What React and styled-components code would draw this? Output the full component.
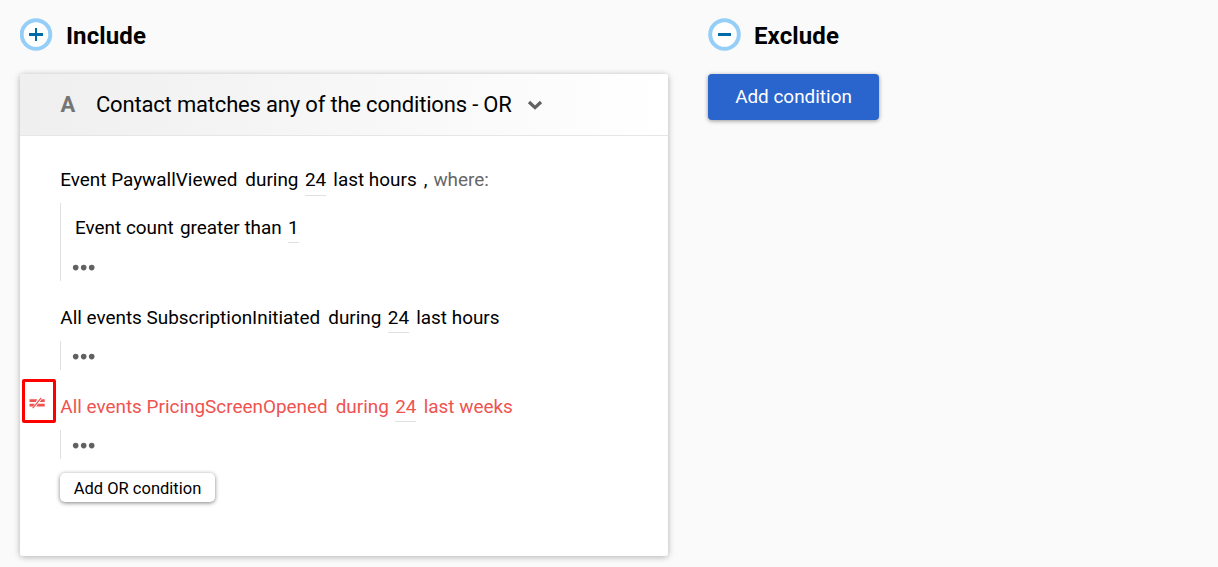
import React from "react";
import styled, { createGlobalStyle } from "styled-components";

const GlobalStyle = createGlobalStyle`
  * {
    box-sizing: border-box;
  }

  body {
    margin: 0;
    background: #fafafa;
    color: #000;
    font-family: Roboto, "Liberation Sans", sans-serif;
  }
`;

const Page = styled.main`
  display: grid;
  grid-template-columns: 648px 1fr;
  column-gap: 40px;
  min-height: 567px;
  padding: 18px 20px 0;
`;

const Heading = styled.header`
  display: flex;
  align-items: center;
  height: 33px;
  margin-bottom: 23px;
  gap: 13px;
`;

const Title = styled.h2`
  margin: 3px 0 0;
  font-size: 24px;
  line-height: 32px;
  font-weight: 700;
  letter-spacing: 0.1px;
`;

const Card = styled.section`
  height: 482px;
  background: #fff;
  border-radius: 3px;
  box-shadow: 0 1px 6px rgba(0, 0, 0, 0.3);
  overflow: hidden;
`;

const CardHeader = styled.div`
  display: flex;
  align-items: center;
  height: 62px;
  padding-left: 40.4px;
  background: linear-gradient(90deg, #efefef, #fff);
  border-bottom: 1px solid #e6e6e6;
  font-size: 22px;
`;

const Letter = styled.strong`
  width: 35.6px;
  color: #757575;
  font-weight: 700;
`;

const CardTitle = styled.span`
  margin-right: 15.5px;
  letter-spacing: -0.18px;
`;

const CardBody = styled.div`
  padding: 28px 40px 0;
`;

const Condition = styled.div`
  position: relative;
  display: flex;
  height: 32px;
  padding-left: ${p => p.$indent || 0.3}px;
  font-size: 18.92px;
  line-height: ${p => p.$line || 34}px;
  white-space: pre;
  color: ${p => (p.$negated ? "#ef5350" : "#000")};
`;

const Part = styled.span`
  margin-left: ${p => p.$gap || 0}px;
  color: ${p => (p.$muted ? "#666" : "inherit")};
`;

const Value = styled.span`
  height: 32px;
  margin-left: 6.4px;
  margin-right: 7.2px;
  border-bottom: 1px solid #e0e0e0;
`;

const Filters = styled.div`
  display: flex;
  flex-direction: column;
  justify-content: flex-end;
  height: ${p => p.$height || 29}px;
  margin: ${p => p.$top || 8}px 0 20px;
  padding-bottom: 9px;
  border-left: 1px solid #e0e0e0;
`;

const Dots = styled.svg`
  display: block;
  width: 24px;
  height: 8px;
  margin-left: 11px;
`;

const FilterRow = styled.div`
  height: 53px;
`;

const NegationMark = styled.div`
  position: absolute;
  left: -38px;
  top: -11px;
  width: 34px;
  height: 44px;
  border: 3px solid #fe0000;
  border-radius: 2px;

  svg {
    display: block;
    margin: 15px 0 0 4px;
  }
`;

const PrimaryButton = styled.button`
  width: 171px;
  height: 46px;
  padding: 0 0 2px;
  border: 0;
  border-radius: 4px;
  background: #2a64cd;
  color: #fff;
  font: 18.92px Roboto, "Liberation Sans", sans-serif;
  box-shadow: 0 1px 4px rgba(0, 0, 0, 0.4);
`;

const SmallButton = styled.button`
  display: block;
  width: 155px;
  height: 29px;
  margin-top: -6px;
  padding: 1px 0 0;
  border: 0;
  border-radius: 5px;
  background: #fff;
  color: #000;
  font: 16.5px Roboto, "Liberation Sans", sans-serif;
  box-shadow: 0 1px 4px rgba(0, 0, 0, 0.5);
`;

function SignIcon({ plus }) {
  return (
    <svg width="33" height="33" viewBox="0 0 33 33">
      <circle
        cx={plus ? 16 : 16.5}
        cy="16.5"
        r="14.3"
        fill="#fff"
        stroke="#95cff8"
        strokeWidth="4"
      />
      <path d={plus ? "M9 15h14v3H9z" : "M10 15h13v3H10z"} fill="#0069a8" />
      {plus && <path d="M15 10h2v13h-2z" fill="#0069a8" />}
    </svg>
  );
}

function More() {
  return (
    <Dots viewBox="0 0 24 8" fill="#616161">
      <circle cx="3.7" cy="3.6" r="2.8" />
      <circle cx="11.7" cy="3.6" r="2.8" />
      <circle cx="19.7" cy="3.6" r="2.8" />
    </Dots>
  );
}

function Period({ value = 24, unit }) {
  return (
    <>
      <Part $gap={8}>during</Part>
      <Value>{value}</Value>
      <Part>last {unit}</Part>
    </>
  );
}

function App() {
  return (
    <>
      <GlobalStyle />
      <Page>
        <section>
          <Heading>
            <SignIcon plus />
            <Title>Include</Title>
          </Heading>
          <Card>
            <CardHeader>
              <Letter>A</Letter>
              <CardTitle>Contact matches any of the conditions - OR</CardTitle>
              <svg width="16" height="12" viewBox="0 0 16 12">
                <path
                  d="M2 3 8 8.6 14 3"
                  fill="none"
                  stroke="#616161"
                  strokeWidth="3.3"
                />
              </svg>
            </CardHeader>
            <CardBody>
              <Condition $line={32}>
                <Part>Event PaywallViewed</Part>
                <Period unit="hours" />
                <Part $gap={7}>,</Part>
                <Part $gap={6} $muted>
                  where:
                </Part>
              </Condition>
              <Filters $height={78} $top={7}>
                <FilterRow>
                  <Condition $indent={14}>
                    <Part>Event count</Part>
                    <Part $gap={6.3}>greater than</Part>
                    <Value>1</Value>
                  </Condition>
                </FilterRow>
                <More />
              </Filters>
              <Condition>
                <Part>All events SubscriptionInitiated</Part>
                <Period unit="hours" />
              </Condition>
              <Filters>
                <More />
              </Filters>
              <Condition $negated>
                <NegationMark>
                  <svg width="17" height="12" viewBox="0 0 17 12" fill="#ef5350">
                    <path d="M.5 2.2h7.7L6.8 5H.5zM.5 6.8h5.3L4 9.4H.5zM12.8 2.2h2.9V5h-5zM9 6.8h6.7v2.6H7.2z" />
                    <path
                      d="M3.8 11.2 12.2.8"
                      stroke="#ef5350"
                      strokeWidth="1.3"
                    />
                  </svg>
                </NegationMark>
                <Part>All events PricingScreenOpened</Part>
                <Period unit="weeks" />
              </Condition>
              <Filters>
                <More />
              </Filters>
              <SmallButton>Add OR condition</SmallButton>
            </CardBody>
          </Card>
        </section>
        <section>
          <Heading>
            <SignIcon />
            <Title>Exclude</Title>
          </Heading>
          <PrimaryButton>Add condition</PrimaryButton>
        </section>
      </Page>
    </>
  );
}

export default App;
